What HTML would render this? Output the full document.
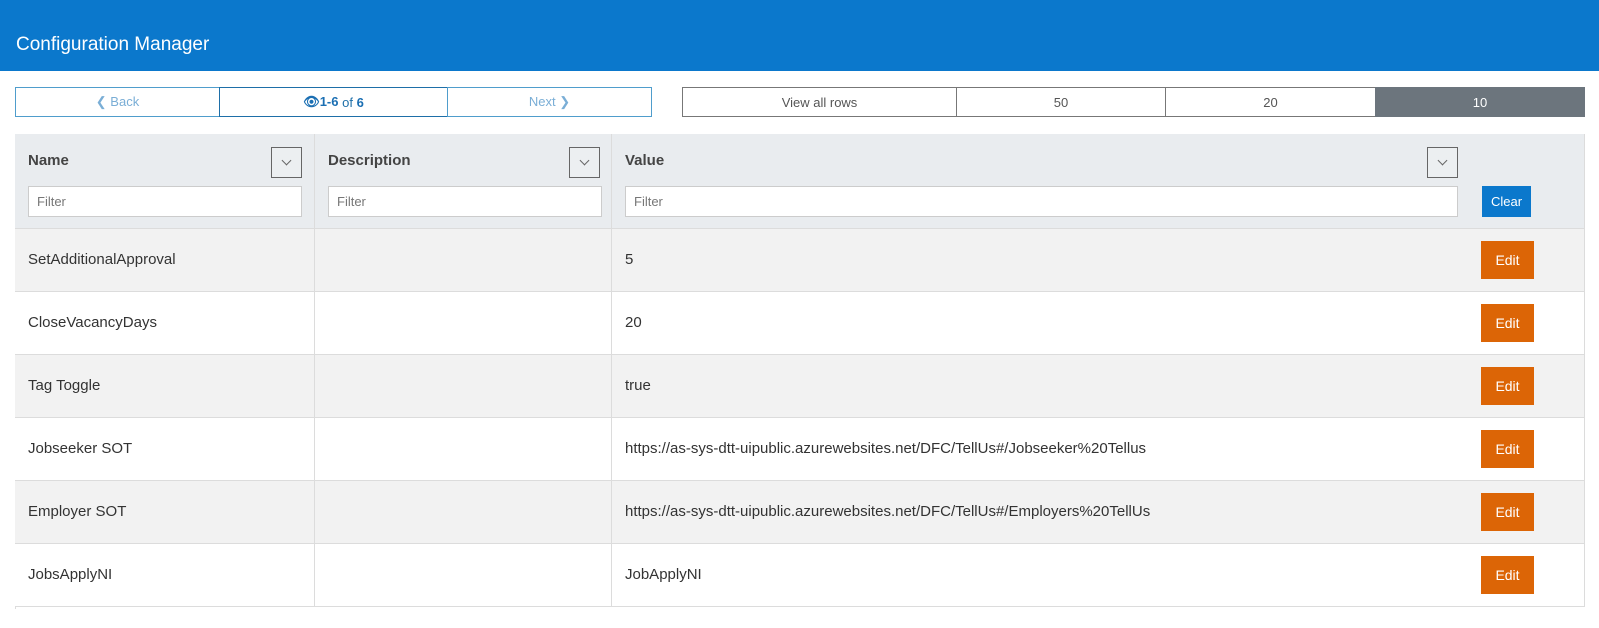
<!DOCTYPE html>
<html><head><meta charset="utf-8"><style>
*{box-sizing:border-box;margin:0;padding:0}
body{width:1599px;height:628px;background:#fff;font-family:"Liberation Sans",sans-serif;color:#333;position:relative;overflow:hidden}
.hdr{position:absolute;left:0;top:0;width:1599px;height:71px;background:#0b78cc;color:#fff;font-size:19px;padding:34px 0 0 16px}
.seg{position:absolute;top:87px;height:30px;border:1px solid #4f9dcc;font-size:13px;display:flex;align-items:center;justify-content:center;color:#7aaed6}
.rs{position:absolute;top:87px;height:30px;border:1px solid #777;font-size:13px;display:flex;align-items:center;justify-content:center;color:#555}
.cell{position:absolute;border-right:1px solid #dcdcdc;border-bottom:1px solid #dcdcdc}
.th{background:#e9ecef;top:134px;height:95px}
.th b{position:absolute;left:13px;top:18px;font-size:15px;color:#444}
.dd{position:absolute;top:13px;width:31px;height:31px;border:1px solid #666;background:#eceff1}
.dd:after{content:"";position:absolute;left:11px;top:9px;width:6px;height:6px;border-right:1.5px solid #666;border-bottom:1.5px solid #666;transform:rotate(45deg)}
.fi{position:absolute;left:13px;top:52px;height:31px;background:#fff;border:1px solid #ccc;font-size:13px;color:#777;padding:7px 8px}
.td{font-size:15px;color:#333;padding:22px 0 0 13px}
.edit{position:absolute;left:12px;top:12px;width:53px;height:38px;background:#dc6506;color:#fff;font-size:14px;text-align:center;line-height:38px}
</style></head><body>
<div class="hdr">Configuration Manager</div>
<div class="seg" style="left:15px;width:205px">&#10094;&nbsp;Back</div>
<div class="seg" style="left:219px;width:229px;border-color:#1e6fa8;color:#1e6fa8"><span style="font-weight:bold;color:#1b6fb3">&#128065;&#xFE0E;1-6</span>&nbsp;of&nbsp;<b style="color:#1b6fb3">6</b></div>
<div class="seg" style="left:447px;width:205px">Next&nbsp;&#10095;</div>
<div class="rs" style="left:682px;width:275px">View all rows</div>
<div class="rs" style="left:956px;width:210px">50</div>
<div class="rs" style="left:1165px;width:211px">20</div>
<div class="rs" style="left:1375px;width:210px;background:#6c757d;border-color:#6c757d;color:#fff">10</div>

<div style="position:absolute;left:15px;top:134px;width:1570px;height:475px;border-left:1px solid #dcdcdc;border-top:1px solid #dcdcdc"></div>
<div class="cell th" style="left:15px;width:300px"><b>Name</b><div class="dd" style="left:256px"></div><div class="fi" style="width:274px">Filter</div></div>
<div class="cell th" style="left:315px;width:297px"><b>Description</b><div class="dd" style="left:254px"></div><div class="fi" style="width:274px">Filter</div></div>
<div class="cell th" style="left:612px;width:858px"><b>Value</b><div class="dd" style="left:815px"></div><div class="fi" style="width:833px">Filter</div></div>
<div class="cell th" style="left:1469px;width:116px"><div style="position:absolute;left:13px;top:52px;width:49px;height:31px;background:#0b78cc;color:#fff;font-size:13px;text-align:center;line-height:31px">Clear</div></div>

<div id="rows"></div>
<script>
var d=[["SetAdditionalApproval","5"],["CloseVacancyDays","20"],["Tag Toggle","true"],["Jobseeker SOT","https://as-sys-dtt-uipublic.azurewebsites.net/DFC/TellUs#/Jobseeker%20Tellus"],["Employer SOT","https://as-sys-dtt-uipublic.azurewebsites.net/DFC/TellUs#/Employers%20TellUs"],["JobsApplyNI","JobApplyNI"]];
var h="";
d.forEach(function(r,i){var t=229+i*63,bg=i%2==0?"#f2f2f2":"#fff",s="top:"+t+"px;height:63px;background:"+bg+";";
h+='<div class="cell td" style="'+s+'left:15px;width:300px">'+r[0]+'</div>';
h+='<div class="cell td" style="'+s+'left:315px;width:297px"></div>';
h+='<div class="cell td" style="'+s+'left:612px;width:858px">'+r[1]+'</div>';
h+='<div class="cell" style="'+s+'left:1469px;width:116px"><div class="edit">Edit</div></div>';});
document.getElementById("rows").innerHTML=h;
</script>
</body></html>
